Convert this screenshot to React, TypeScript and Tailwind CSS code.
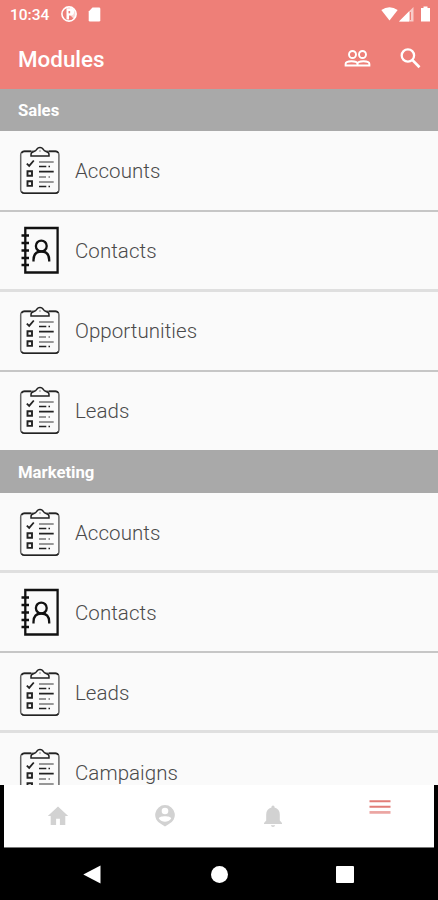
type IconName = 'clipboard' | 'contact'
type ModuleType = { name: string; icon: IconName }

const sales: ModuleType[] = [
  { name: 'Accounts', icon: 'clipboard' },
  { name: 'Contacts', icon: 'contact' },
  { name: 'Opportunities', icon: 'clipboard' },
  { name: 'Leads', icon: 'clipboard' },
]

const marketing: ModuleType[] = [
  { name: 'Accounts', icon: 'clipboard' },
  { name: 'Contacts', icon: 'contact' },
  { name: 'Leads', icon: 'clipboard' },
  { name: 'Campaigns', icon: 'clipboard' },
]

function ClipboardIcon() {
  return (
    <svg className="h-[50px] w-[42px] shrink-0" viewBox="0 0 42 50" fill="none" stroke="#222">
      <rect x="1.7" y="6.3" width="38.2" height="42" rx="3.5" stroke="#666" strokeWidth="1.5" />
      <path d="M2.5 46.7Q3.4 48.3 5.5 48.3H36.5Q38.6 48.3 39.4 46.7M2.5 8Q3.5 6.4 5.5 6.4H12M30 6.4H36.5Q38.6 6.4 39.4 8" strokeWidth="1.6" />
      <path d="M12 11V9.5Q12 7.3 14.5 6.7Q17 6 17.8 4.3Q19 2.6 21 2.6Q23 2.6 24.2 4.3Q25 6 27.5 6.7Q30 7.3 30 9.5V11Z" fill="#fafafa" strokeWidth="1.5" />
      <path d="M20.2 6H21.8" stroke="#777" strokeWidth="1" />
      <path d="M7.8 18.6L10.2 20.9L14.8 15.5" strokeWidth="1.8" />
      <path d="M8.5 26.2H13V30.8H8.5ZM8.5 36.3H13V40.9H8.5Z" strokeWidth="1.9" />
      <path d="M20 17H34.7M20 32H27M29.5 32H31M20 37H34.7" stroke="#777" strokeWidth="1.7" />
      <path d="M20 21.5H27.3M29.5 21.5H31M20 26.700H34.7M20 41.5H27.3M29.5 41.5H31" strokeWidth="1.7" />
    </svg>
  )
}

function ContactIcon() {
  return (
    <svg className="h-[50px] w-[42px] shrink-0" viewBox="0 0 42 50" fill="none" stroke="#111" strokeWidth="2.3">
      <path d="M6.300 3H38.600V47.500H6.300Z" />
      <path d="M2.500 10.500H10M2.500 18H10M2.500 25.500H10M2.500 33H10M2.500 40H10" strokeWidth="2.4" />
      <circle cx="22.300" cy="21" r="5.400" />
      <path d="M14.500 36.500V35Q14.500 26.500 22.300 26.500Q30.200 26.500 30.200 35V36.500" />
    </svg>
  )
}

function SectionHeader({ title, className }: { title: string; className: string }) {
  return (
    <div className={`flex shrink-0 items-center bg-[#a9a9a9] pt-0.5 pl-[18px] text-[16.7px] font-bold text-white ${className}`}>
      {title}
    </div>
  )
}

function ModuleRow({ item, className }: { item: ModuleType; className: string }) {
  return (
    <div className={`flex h-20 shrink-0 items-start pl-[19px] last:border-b-0 ${className}`}>
      {item.icon === 'clipboard' ? <ClipboardIcon /> : <ContactIcon />}
      <span className="mt-[14px] ml-[14px] text-[20.5px] leading-6 font-light tracking-[0.05px] text-[#4a4a4a]">{item.name}</span>
    </div>
  )
}

const thin = 'border-b-2 border-[#c6c6c6]'
const thick = 'border-b-3 border-[#dfdfdf]'

function TopBar() {
  return (
    <header className="h-[89px] shrink-0 bg-[#ee7f78] text-white">
      <div className="flex h-[28px] items-center pr-[8px] pl-[10px]">
        <span className="w-[51px] pt-[3px] text-[15.5px] font-medium">10:34</span>
        <svg className="h-4 w-4" viewBox="0 0 16 16">
          <circle cx="8" cy="8" r="7.1" fill="none" stroke="currentColor" strokeWidth="1.6" />
          <path d="M6 2.2H9.5A3.5 3.5 0 0 1 9.5 9.5H8V13.5H5.5V2.2Z" fill="currentColor" />
          <path d="M7.5 5H9.5V7.3H7.5Z" fill="#ee7f78" />
          <path d="M9 1A7 7 0 0 1 13 13L9 9Z" fill="currentColor" fillOpacity=".7" />
        </svg>
        <svg className="ml-[11px] h-[15px] w-[13px]" viewBox="0 0 13 15" fill="currentColor">
          <path d="M4.5.5H11Q12.3.5 12.3 1.8V13.2Q12.3 14.5 11 14.5H2Q.7 14.5.7 13.2V4.5Z" />
        </svg>
        <svg className="ml-auto h-[14px] w-[17px]" viewBox="0 0 17 14" fill="currentColor">
          <path d="M8.5 13.5L.3 3Q8.5-2.3 16.7 3Z" />
        </svg>
        <svg className="ml-[1px] h-[15px] w-[15px]" viewBox="0 0 15 15" fill="currentColor">
          <path d="M14.5 0V14.5H0Z" fillOpacity=".6" />
          <path d="M10 4.5V14.5H0Z" />
          <path d="M11.5 5V13" stroke="#ee7f78" />
        </svg>
        <svg className="ml-[7px] h-4 w-[9px]" viewBox="0 0 9 16" fill="currentColor">
          <path d="M2.5.5H6.5V2H9V15.5H0V2H2.5Z" />
        </svg>
      </div>
      <div className="flex h-[61px] items-center pr-[16px] pl-[18px]">
        <h1 className="mt-[3px] text-[22.4px] font-medium">Modules</h1>
        <svg className="ml-auto h-[19px] w-[27px]" viewBox="0 0 27 19" fill="none" stroke="currentColor" strokeWidth="1.9">
          <circle cx="8.5" cy="5.5" r="3.5" />
          <circle cx="18.5" cy="5.5" r="3.5" />
          <path d="M1.6 16.5V15Q1.6 12.2 7.5 12.2Q13.5 12.2 13.5 15V16.5ZM13.5 16.500V15Q13.500 12.200 19.500 12.200Q25.400 12.200 25.400 15V16.500Z" />
        </svg>
        <svg className="mr-px ml-[29px] h-[21px] w-[21px]" viewBox="0 0 21 21" fill="none" stroke="currentColor" strokeWidth="2.3">
          <circle cx="7.9" cy="7.5" r="6.2" />
          <path d="M12.5 12.1L19.5 19.3" strokeWidth="2.7" />
        </svg>
      </div>
    </header>
  )
}

function TabBar() {
  return (
    <nav className="grid h-[62px] shrink-0 grid-cols-4 bg-white text-[#d2d2d2]">
      <div className="flex justify-center pt-[21px]">
        <svg className="h-5 w-[22px]" viewBox="0 0 22 20" fill="currentColor">
          <path d="M11 .5L21.2 10H18.3V19H12.9V12.7H9.1V19H3.7V10H.8Z" />
        </svg>
      </div>
      <div className="flex justify-center pt-[19px]">
        <svg className="h-[23px] w-[22px]" viewBox="0 0 22 23">
          <path d="M11 1A10 10 0 0 1 14.5 20.3L11 22.5L7.5 20.3A10 10 0 0 1 11 1Z" fill="currentColor" />
          <circle cx="11" cy="7" r="3.3" fill="white" />
          <path d="M4.8 14.5C5 11.5 17 11.5 17.2 14.5C14 18.8 8 18.8 4.8 14.5Z" fill="white" />
        </svg>
      </div>
      <div className="flex justify-center pt-5">
        <svg className="h-[23px] w-[18px]" viewBox="0 0 18 23" fill="currentColor">
          <path d="M7.5 2.5V1.5Q9-.5 10.5 1.5V2.5Q15.8 4 15.8 9.5V15.5L18 18V19H0V18L2.2 15.5V9.5Q2.2 4 7.5 2.5ZM6.8 20.2H11.2Q10.8 22 9 22Q7.2 22 6.8 20.2Z" />
        </svg>
      </div>
      <div className="flex justify-center pt-[14px]">
        <svg className="h-4 w-[22px]" viewBox="0 0 22 16" fill="none" stroke="#e27d78">
          <path d="M.5 2.2H21.5M.5 7.7H21.5" strokeWidth="1.9" />
          <path d="M.5 13.4H21.5" strokeWidth="2.7" stroke="#eba5a2" />
        </svg>
      </div>
    </nav>
  )
}

function SystemBar() {
  return (
    <div className="flex h-[52px] items-center bg-black pl-[79px] text-white">
      <svg className="h-[19px] w-[18px]" viewBox="0 0 18 19" fill="currentColor">
        <path d="M.3 9.5L17.5.5V18.5Z" />
      </svg>
      <div className="ml-[110px] h-[17px] w-[17px] rounded-full bg-white" />
      <div className="ml-[108px] h-[17px] w-[18px] rounded-[1px] bg-white" />
    </div>
  )
}

export default function App() {
  return (
    <div className="flex h-[900px] w-[438px] flex-col overflow-hidden bg-black font-['Roboto',sans-serif]">
      <TopBar />
      <main className="flex h-[696px] shrink-0 flex-col overflow-hidden bg-[#fafafa]">
        <SectionHeader title="Sales" className="h-[42px]" />
        <div className="flex h-[319px] shrink-0 flex-col overflow-hidden pt-px">
          {sales.map((item, index) => (
            <ModuleRow key={index} item={item} className={index % 2 ? `pt-[13px] ${thick}` : `pt-[13px] ${thin}`} />
          ))}
        </div>
        <SectionHeader title="Marketing" className="h-[43px]" />
        <div>
          {marketing.map((item, index) => (
            <ModuleRow key={index} item={item} className={index % 2 ? `pt-[14px] ${thin}` : `pt-[14px] ${thick}`} />
          ))}
        </div>
      </main>
      <div className="px-1">
        <TabBar />
        <div className="h-px bg-[#777]" />
        <SystemBar />
      </div>
    </div>
  )
}
